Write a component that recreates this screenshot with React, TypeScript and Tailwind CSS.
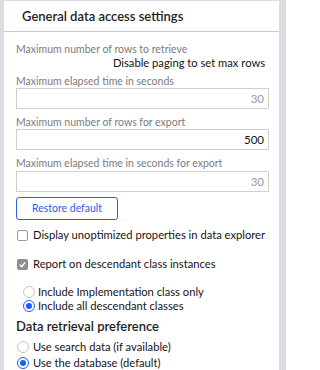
import React from "react";

function Label({ children, className = "" }: { children: React.ReactNode; className?: string }) {
  return <div className={`text-[10.5px] leading-[13px] text-[#7b7b7b] whitespace-nowrap ${className}`}>{children}</div>;
}

function NumberBox({ value, disabled }: { value: string; disabled?: boolean }) {
  return (
    <div
      className={`h-[21px] border border-[#cfcfcf] bg-white flex items-center justify-end pr-[4px] text-[11.5px] ${
        disabled ? "text-[#9a9a9a]" : "text-[#151515]"
      }`}
    >
      {value}
    </div>
  );
}

function Radio({ checked }: { checked?: boolean }) {
  return checked ? (
    <span className="w-[12px] h-[12px] rounded-full border border-[#1a5cff] flex items-center justify-center shrink-0">
      <span className="w-[6px] h-[6px] rounded-full bg-[#1a5cff]" />
    </span>
  ) : (
    <span className="w-[12px] h-[12px] rounded-full border border-[#c4c4c4] shrink-0" />
  );
}

export default function App() {
  return (
    <div
      className="w-[286px] h-[370px] bg-[#dcdde3] pt-px pl-[4px] pr-[7px] overflow-hidden"
      style={{ fontFamily: '"Segoe UI", Lato, "Liberation Sans", sans-serif' }}
    >
      <div className="bg-white h-full">
        <div className="h-[31px] border-b border-[#c9c9d1] pl-[18px] flex items-center">
          <span className="text-[13px] font-semibold text-[#1e1e1e] pt-px">General data access settings</span>
        </div>

        <div className="pl-[12px] pr-[10px] pt-[11px] text-[11.2px] text-[#151515]">
          <Label>Maximum number of rows to retrieve</Label>
          <div className="leading-[14px] text-right pr-[4px] whitespace-nowrap">Disable paging to set max rows</div>

          <Label className="mt-[5px]">Maximum elapsed time in seconds</Label>
          <NumberBox value="30" disabled />

          <Label className="mt-[7px]">Maximum number of rows for export</Label>
          <NumberBox value="500" />

          <Label className="mt-[7px] mb-px">Maximum elapsed time in seconds for export</Label>
          <NumberBox value="30" disabled />

          <button className="mt-[5px] w-[102px] h-[23px] border border-[#2c5ee8] rounded-[3px] text-[10.5px] text-[#2c5ee8] bg-white">
            Restore default
          </button>

          <div className="mt-[7px] h-[16px] flex items-center gap-[5px] pl-px whitespace-nowrap">
            <span className="w-[11px] h-[11px] border border-[#9a9a9a] rounded-[2px] bg-white shrink-0" />
            <span>Display unoptimized properties in data explorer</span>
          </div>

          <div className="mt-[13px] h-[16px] flex items-center gap-[5px] pl-px whitespace-nowrap">
            <span className="w-[11px] h-[11px] rounded-[2px] bg-[#8f8f8f] flex items-center justify-center shrink-0">
              <svg viewBox="0 0 10 10" className="w-[9px] h-[9px]">
                <path d="M2 5.2 L4.1 7.3 L8 2.8" fill="none" stroke="white" strokeWidth="1.6" />
              </svg>
            </span>
            <span>Report on descendant class instances</span>
          </div>

          <div className="mt-[13px] pl-[7px] whitespace-nowrap">
            <div className="h-[14px] flex items-center gap-[3px]">
              <Radio />
              <span>Include Implementation class only</span>
            </div>
            <div className="h-[14px] flex items-center gap-[3px]">
              <Radio checked />
              <span>Include all descendant classes</span>
            </div>
          </div>

          <div className="mt-[5px] h-[18px] flex items-center text-[13px] font-semibold text-[#1e1e1e]">
            Data retrieval preference
          </div>

          <div className="mt-[3px] pl-px whitespace-nowrap">
            <div className="h-[16px] flex items-center gap-[4px]">
              <Radio />
              <span>Use search data (if available)</span>
            </div>
            <div className="h-[16px] flex items-center gap-[4px]">
              <Radio checked />
              <span>Use the database (default)</span>
            </div>
          </div>
        </div>
      </div>
    </div>
  );
}
